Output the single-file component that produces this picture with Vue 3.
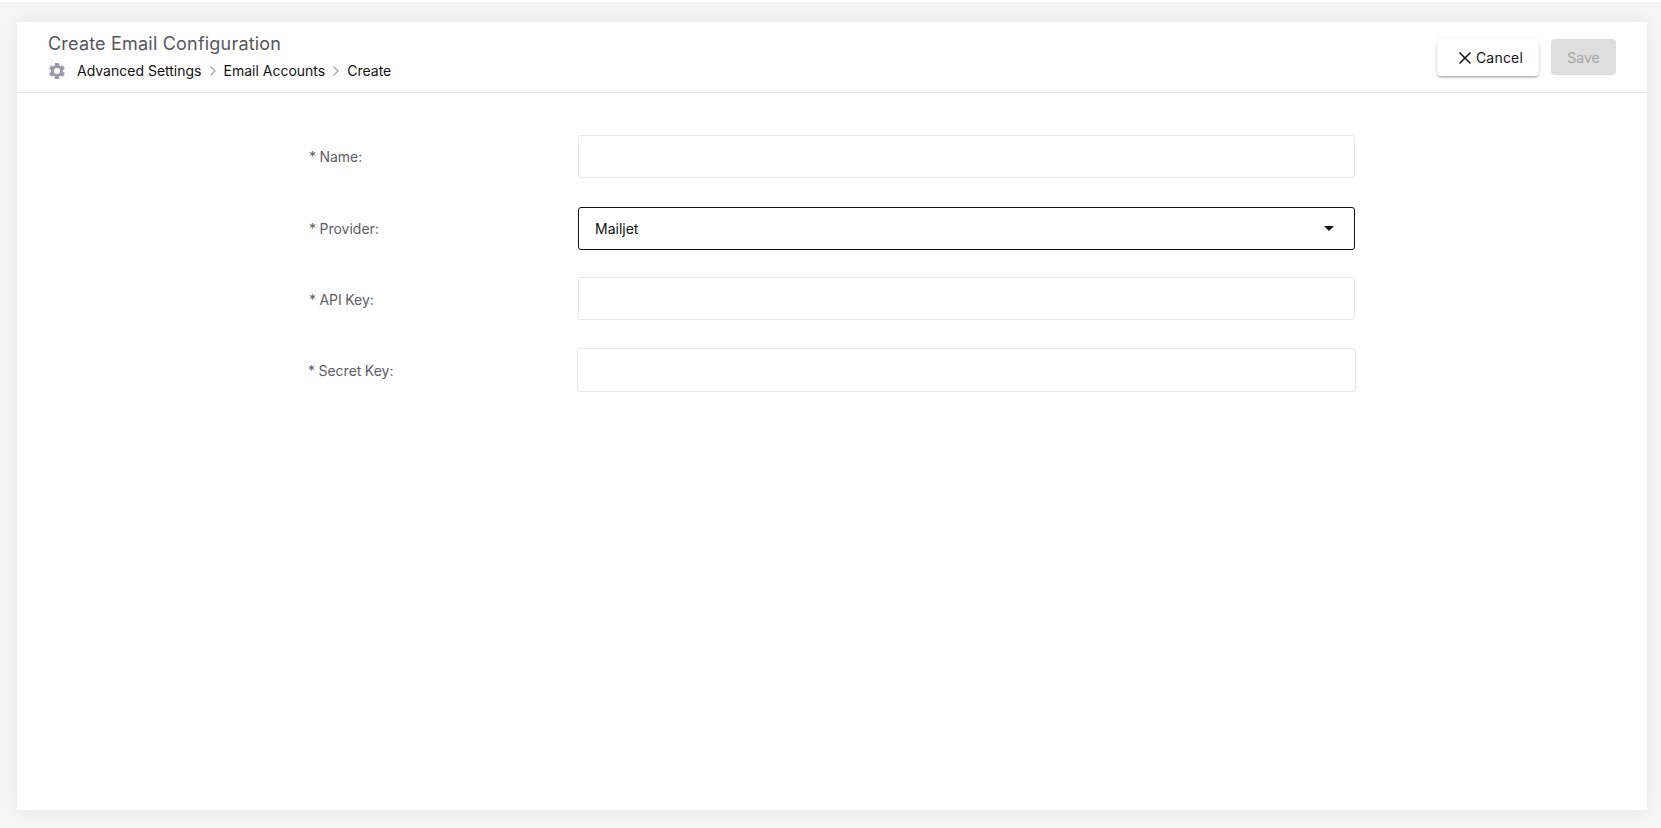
<script setup>
const crumbs = ['Advanced Settings', 'Email Accounts']
</script>

<template>
  <div class="page">
    <main class="card">
      <header class="head">
        <div class="titles">
          <h1 class="title">Create Email Configuration</h1>
          <nav class="crumbs">
            <svg class="gear" viewBox="0 0 24 24" width="20" height="20">
              <path fill="#9a9aae" d="M19.14 12.94c.04-.3.06-.61.06-.94 0-.32-.02-.64-.07-.94l2.03-1.58a.49.49 0 0 0 .12-.61l-1.92-3.32a.49.49 0 0 0-.59-.22l-2.39.96c-.5-.38-1.03-.7-1.62-.94l-.36-2.54a.48.48 0 0 0-.48-.41h-3.84a.48.48 0 0 0-.47.41l-.36 2.54c-.59.24-1.13.57-1.62.94l-2.39-.96a.49.49 0 0 0-.59.22L2.74 8.87a.47.47 0 0 0 .12.61l2.03 1.58c-.05.3-.09.63-.09.94s.02.64.07.94l-2.03 1.58a.49.49 0 0 0-.12.61l1.92 3.32c.12.22.37.29.59.22l2.39-.96c.5.38 1.03.7 1.62.94l.36 2.54c.05.24.24.41.48.41h3.84c.24 0 .44-.17.47-.41l.36-2.54c.59-.24 1.13-.56 1.62-.94l2.39.96c.22.08.47 0 .59-.22l1.92-3.32a.47.47 0 0 0-.12-.61l-2.01-1.58zM12 15.6A3.6 3.6 0 1 1 12 8.4a3.6 3.6 0 0 1 0 7.2z"/>
            </svg>
            <template v-for="c in crumbs" :key="c">
              <span class="crumb">{{ c }}</span>
              <svg class="sep" viewBox="0 0 8 12" width="8" height="12">
                <path d="M1.5 1.5 6 6l-4.500 4.500" fill="none" stroke="#9e9ea8" stroke-width="1.1"/>
              </svg>
            </template>
            <span class="crumb">Create</span>
          </nav>
        </div>
        <div class="actions">
          <button class="btn cancel" type="button">
            <svg viewBox="0 0 14 14" width="14" height="14">
              <path d="M1.500 1.500 12.500 12.500M12.500 1.500 1.500 12.500" fill="none" stroke="#111" stroke-width="1.500"/>
            </svg>
            <span class="cancel-text">Cancel</span>
          </button>
          <button class="btn save" type="button" disabled>Save</button>
        </div>
      </header>

      <form class="form">
        <div class="row">
          <label class="label">* Name:</label>
          <input class="field" type="text" />
        </div>
        <div class="row row-provider">
          <label class="label">* Provider:</label>
          <div class="field select">
            <span>Mailjet</span>
            <span class="caret"></span>
          </div>
        </div>
        <div class="row row-api">
          <label class="label">* API Key:</label>
          <input class="field" type="text" />
        </div>
        <div class="row row-secret">
          <label class="label">* Secret Key:</label>
          <input class="field" type="password" />
        </div>
      </form>
    </main>
  </div>
</template>

<style>
html, body { margin: 0; background: #fff; }
</style>

<style scoped>
.page {
  box-sizing: border-box;
  margin-top: 2px;
  height: 826px;
  padding: 20px 14px 18px 17px;
  background: #f6f6f6;
  font-family: Inter, "Liberation Sans", sans-serif;
  overflow: hidden;
}
.card {
  height: 100%;
  background: #fff;
  box-shadow: 0 0 16px rgba(0, 0, 0, 0.07);
  display: flex;
  flex-direction: column;
}
.head {
  box-sizing: border-box;
  height: 71px;
  flex: none;
  border-bottom: 1px solid #e4e4e9;
  padding: 11px 31px 0 31px;
  display: flex;
  justify-content: space-between;
}
.title {
  margin: 0;
  font-size: 18px;
  font-weight: 400;
  line-height: 22px;
  letter-spacing: 0.2px;
  color: #56565c;
}
.crumbs {
  display: flex;
  align-items: center;
  margin-top: 6px;
  font-size: 14px;
  line-height: 20px;
  color: #111;
}
.gear { margin: 0 10px 0 -1px; }
.sep { margin: 0 7px 0 7px; }
.actions {
  display: flex;
  align-items: flex-start;
  gap: 12px;
  padding-top: 6px;
}
.btn {
  font-family: inherit;
  font-size: 14px;
  border: 0;
  border-radius: 4px;
  display: flex;
  align-items: center;
  justify-content: center;
}
.cancel {
  width: 102px;
  height: 37px;
  gap: 4px;
  padding: 0 0 0 5px;
  background: #fff;
  color: #111;
  box-shadow: 0 2px 3px -1px rgba(0,0,0,.4), 0 0 3px rgba(0,0,0,.1);
}
.cancel-text { letter-spacing: 0.2px; }
.save {
  width: 65px;
  height: 36px;
  background: #dedede;
  color: #a5a5a5;
}
.form {
  width: 1046px;
  margin: 42px 0 0 292px;
  display: flex;
  flex-direction: column;
  gap: 28px;
  font-size: 14px;
}
.row {
  display: flex;
  align-items: center;
  height: 43px;
}
.row-provider { margin-top: 1px; }
.row-api { margin-top: -1px; }
.row-secret { height: 44px; margin-left: -1px; margin-right: -1px; }
.label {
  width: 269px;
  flex: none;
  color: #5c5c64;
  line-height: 20px;
  word-spacing: -0.5px;
}
.row-api .label { margin-top: 2px; }
.row-secret .label { margin-top: 2px; }
.field {
  box-sizing: border-box;
  flex: 1;
  min-width: 0;
  height: 100%;
  border: 1px solid #e8e8ec;
  border-radius: 3px;
  background: #fff;
  outline: none;
  font: inherit;
  margin: 0;
}
.select {
  border-color: #111;
  color: #111;
  display: flex;
  align-items: center;
  justify-content: space-between;
  padding: 0 20px 0 16px;
}
.caret {
  width: 0;
  height: 0;
  border-left: 5px solid transparent;
  border-right: 5px solid transparent;
  border-top: 5px solid #111;
}
</style>
